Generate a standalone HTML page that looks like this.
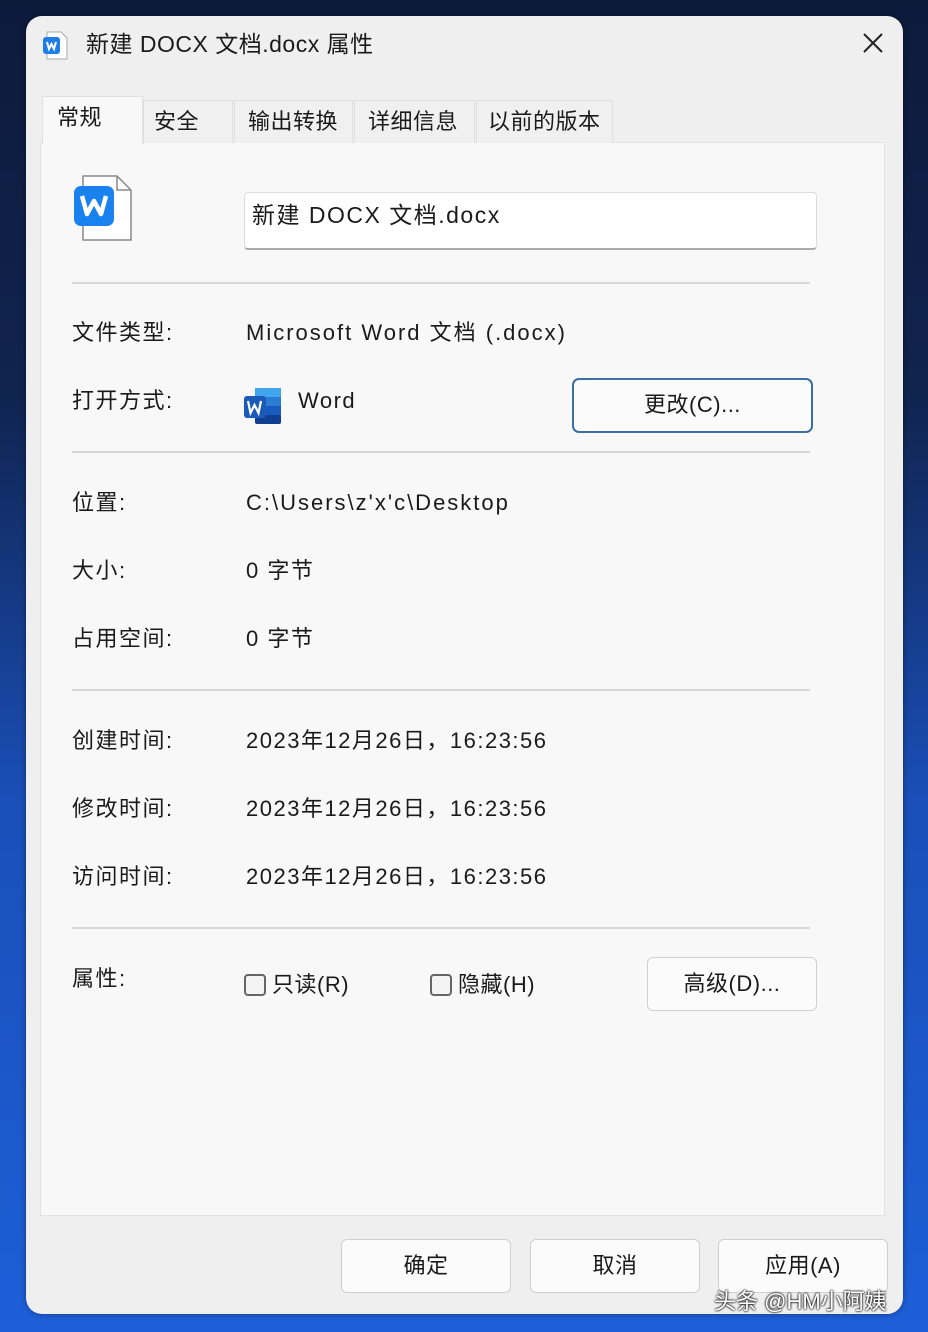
<!DOCTYPE html><html><head><meta charset="utf-8"><style>
*{margin:0;padding:0;box-sizing:border-box}
body{width:928px;height:1332px;overflow:hidden;position:relative;font-family:"Liberation Sans","Noto Sans CJK SC",sans-serif;color:#1a1a1a;letter-spacing:1.5px;
background:linear-gradient(180deg,#0d1a3a 0%,#102450 30%,#1a4fb8 60%,#1d5fd8 100%)}
.a{position:absolute;white-space:nowrap}
.win{position:absolute;left:26px;top:16px;width:877px;height:1298px;border-radius:16px;background:#efeff0;box-shadow:0 0 6px rgba(0,0,0,.4)}
.panel{position:absolute;left:40px;top:142px;width:845px;height:1074px;background:#f8f8f8;border:1px solid #e2e2e2}
.tab{position:absolute;top:100px;height:43px;background:#f0f0f0;border:1px solid #e0e0e0;border-bottom:none;font-size:22px;line-height:42px;padding-left:10px;letter-spacing:0.5px}
.sep{position:absolute;left:72px;width:738px;height:2px;background:#d8d8d8}
.t{font-size:22px;line-height:30px}
.btn{position:absolute;background:#fbfbfb;border:1px solid #cfcfcf;border-radius:6px;font-size:22px;text-align:center;letter-spacing:0.5px}
.cb{display:inline-block;width:22px;height:22px;border:2px solid #666;border-radius:4px;vertical-align:-4px;margin-right:6px;background:#f4f4f4}
</style></head><body>
<div class="win"></div>
<svg class="a" style="left:42px;top:31px" width="28" height="30" viewBox="0 0 28 30"><path d="M5 1h14l6 6v21H5z" fill="#fff" stroke="#aaa"/><rect x="1" y="6" width="17" height="17" rx="3" fill="#1e7ee8"/><path d="M5 11l2 7 2.5-5 2.5 5 2-7" stroke="#fff" stroke-width="2" fill="none"/></svg>
<div class="a t" style="left:86px;top:29px;font-size:23px;letter-spacing:0.5px">新建 DOCX 文档.docx 属性</div>
<svg class="a" style="left:862px;top:32px" width="22" height="22"><path d="M2 2L20 20M20 2L2 20" stroke="#222" stroke-width="2"/></svg>
<div class="panel"></div>
<div class="tab" style="left:42px;width:101px;top:96px;height:48px;background:#f8f8f8;line-height:42px;padding-left:14px">常规</div>
<div class="tab" style="left:143px;width:90px">安全</div>
<div class="tab" style="left:234px;width:119px;padding-left:13px">输出转换</div>
<div class="tab" style="left:354px;width:121px;padding-left:13px">详细信息</div>
<div class="tab" style="left:476px;width:137px;padding-left:11px">以前的版本</div>
<svg class="a" style="left:72px;top:174px" width="62" height="68" viewBox="0 0 62 68"><path d="M11 2h34l14 14v50H11z" fill="#fff" stroke="#888" stroke-width="1.5"/><path d="M45 2v14h14" fill="none" stroke="#888" stroke-width="1.5"/><rect x="2" y="12" width="40" height="40" rx="7" fill="#1a82ee"/><path d="M10 22l5 18 7-13 7 13 5-18" stroke="#fff" stroke-width="4.5" fill="none" stroke-linejoin="round"/></svg>
<div class="a" style="left:244px;top:192px;width:573px;height:58px;background:#fff;border:1px solid #dcdcdc;border-bottom:2px solid #aaa;border-radius:4px"></div>
<div class="a t" style="left:252px;top:200px;font-size:23px">新建 DOCX 文档.docx</div>
<div class="sep" style="top:282px"></div>
<div class="a t" style="left:72px;top:318px">文件类型:</div><div class="a t" style="left:246px;top:318px;letter-spacing:2px">Microsoft Word 文档 (.docx)</div>
<div class="a t" style="left:72px;top:386px">打开方式:</div>
<svg class="a" style="left:243px;top:384px" width="40" height="42" viewBox="0 0 40 42"><rect x="12" y="4" width="26" height="36" rx="3" fill="#2b7cd3"/><rect x="12" y="4" width="26" height="9" fill="#41a5ee"/><rect x="12" y="22" width="26" height="9" fill="#185abd"/><rect x="12" y="31" width="26" height="9" rx="2" fill="#103f91"/><rect x="1" y="12" width="22" height="22" rx="3" fill="#1a5bb8"/><path d="M5 17l2.5 12 4-8 4 8 2.5-12" stroke="#fff" stroke-width="2.2" fill="none"/></svg>
<div class="a t" style="left:298px;top:386px">Word</div>
<div class="btn" style="left:572px;top:378px;width:241px;height:55px;border:2px solid #3a6ea5;line-height:50px;border-radius:7px">更改(C)...</div>
<div class="sep" style="top:451px"></div>
<div class="a t" style="left:72px;top:488px">位置:</div><div class="a t" style="left:246px;top:488px;letter-spacing:2px">C:\Users\z'x'c\Desktop</div>
<div class="a t" style="left:72px;top:556px">大小:</div><div class="a t" style="left:246px;top:556px">0 字节</div>
<div class="a t" style="left:72px;top:624px">占用空间:</div><div class="a t" style="left:246px;top:624px">0 字节</div>
<div class="sep" style="top:689px"></div>
<div class="a t" style="left:72px;top:726px">创建时间:</div><div class="a t" style="left:246px;top:726px">2023年12月26日，16:23:56</div>
<div class="a t" style="left:72px;top:794px">修改时间:</div><div class="a t" style="left:246px;top:794px">2023年12月26日，16:23:56</div>
<div class="a t" style="left:72px;top:862px">访问时间:</div><div class="a t" style="left:246px;top:862px">2023年12月26日，16:23:56</div>
<div class="sep" style="top:927px"></div>
<div class="a t" style="left:72px;top:964px">属性:</div>
<div class="a t" style="left:244px;top:970px;letter-spacing:0.5px"><span class="cb"></span>只读(R)</div>
<div class="a t" style="left:430px;top:970px;letter-spacing:0.5px"><span class="cb"></span>隐藏(H)</div>
<div class="btn" style="left:647px;top:957px;width:170px;height:54px;line-height:52px">高级(D)...</div>
<div class="btn" style="left:341px;top:1239px;width:170px;height:54px;line-height:52px">确定</div>
<div class="btn" style="left:530px;top:1239px;width:170px;height:54px;line-height:52px">取消</div>
<div class="btn" style="left:718px;top:1239px;width:170px;height:54px;line-height:52px">应用(A)</div>
<div class="a" style="left:714px;top:1284px;font-size:22px;letter-spacing:0;color:#fff;text-shadow:0 0 2px #000,0 0 2px #000">头条 @HM小阿姨</div>
</body></html>
